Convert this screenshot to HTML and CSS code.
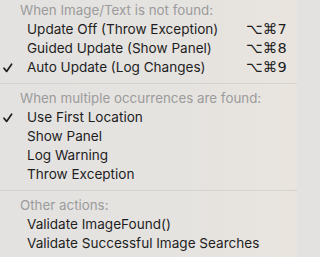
FILE: index.html
```html
<!DOCTYPE html>
<html>
<head>
<meta charset="utf-8">
<link rel="stylesheet" href="styles.css">
</head>
<body>
<div class="menu">
  <div class="header">When Image/Text is not found:</div>
  <div class="item"><span class="check"></span><span class="label">Update Off (Throw Exception)</span><span class="key">⌥⌘7</span></div>
  <div class="item"><span class="check"></span><span class="label">Guided Update (Show Panel)</span><span class="key">⌥⌘8</span></div>
  <div class="item"><span class="check"><svg viewBox="0 0 10 10" width="10" height="10"><path d="M1 5.2 L3.6 8.4 L8.6 1.2" fill="none" stroke="#1e1e1e" stroke-width="1.7" stroke-linecap="round" stroke-linejoin="round"/></svg></span><span class="label">Auto Update (Log Changes)</span><span class="key">⌥⌘9</span></div>
  <div class="sep"></div>
  <div class="header">When multiple occurrences are found:</div>
  <div class="item"><span class="check"><svg viewBox="0 0 10 10" width="10" height="10"><path d="M1 5.2 L3.6 8.4 L8.6 1.2" fill="none" stroke="#1e1e1e" stroke-width="1.7" stroke-linecap="round" stroke-linejoin="round"/></svg></span><span class="label">Use First Location</span></div>
  <div class="item"><span class="check"></span><span class="label">Show Panel</span></div>
  <div class="item"><span class="check"></span><span class="label">Log Warning</span></div>
  <div class="item"><span class="check"></span><span class="label">Throw Exception</span></div>
  <div class="sep"></div>
  <div class="header">Other actions:</div>
  <div class="item"><span class="check"></span><span class="label">Validate ImageFound()</span></div>
  <div class="item"><span class="check"></span><span class="label">Validate Successful Image Searches</span></div>
</div>
</body>
</html>
```
FILE: styles.css
```css
html, body {
  margin: 0;
  padding: 0;
  width: 297px;
  height: 257px;
  overflow: hidden;
}
body {
  background: linear-gradient(90deg, #e3e2e0 0%, #e5e3e0 60%, #e9e4de 100%);
  font-family: Inter, "Noto Sans", "DejaVu Sans", sans-serif;
  font-size: 13.55px;
  color: #1e1e1e;
}
.menu {
  padding-top: 1px;
  display: flex;
  flex-direction: column;
}
.header {
  height: 19px;
  line-height: 19px;
  padding-left: 20px;
  font-size: 13.35px;
  color: #9b9b9b;
}
.item {
  height: 19px;
  line-height: 19px;
  display: flex;
  align-items: center;
  padding-right: 10px;
}
.check {
  width: 27px;
  flex: none;
  display: flex;
  align-items: center;
  padding-left: 3px;
  box-sizing: border-box;
}
.check svg {
  display: block;
}
.label {
  flex: 1;
  white-space: nowrap;
}
.key {
  font-family: "DejaVu Sans", sans-serif;
  font-size: 14.5px;
  letter-spacing: 0.3px;
}
.sep {
  height: 1px;
  background: #d5d3d0;
  margin: 6px 0 5px;
}
```
